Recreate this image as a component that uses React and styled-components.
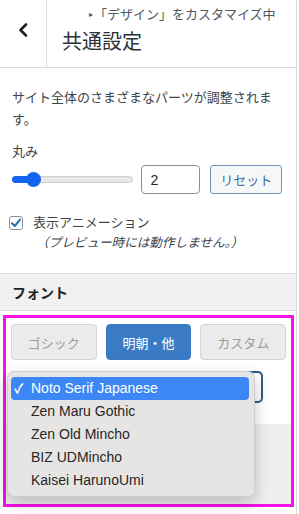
import React from 'react';
import styled, { createGlobalStyle } from 'styled-components';

const Global = createGlobalStyle`
  html, body { margin: 0; padding: 0; background: #fff; }
  body { font-family: "Liberation Sans", "Noto Sans CJK JP", sans-serif; color: #1d2327; }
  * { box-sizing: border-box; }
`;

const Panel = styled.div`
  width: 297px;
  height: 514px;
  border-right: 1px solid #dcdcde;
  background: #fff;
  overflow: hidden;
`;

const Header = styled.header`
  display: flex;
  height: 68px;
  border-bottom: 1px solid #dcdcde;
`;

const BackButton = styled.div`
  width: 47px;
  flex: none;
  border-right: 1px solid #dcdcde;
  display: flex;
  align-items: center;
  justify-content: center;
  padding-bottom: 8px;
`;

const TitleBox = styled.div`
  display: flex;
  flex-direction: column;
  padding: 7px 0 0 15px;
`;

const Action = styled.span`
  font-size: 13px;
  line-height: 16px;
  color: #50575e;
  padding-left: 27px;
  white-space: nowrap;
`;

const Bullet = styled.span`
  font-size: 8px;
  vertical-align: 2px;
  margin-right: 1px;
`;

const Title = styled.h2`
  margin: 6px 0 0;
  font-size: 20px;
  line-height: 26px;
  font-weight: 400;
  color: #2c3338;
`;

const Section = styled.section`
  padding: 19px 14px 20px 12px;
  border-bottom: 1px solid #dcdcde;
  color: #3c434a;
  font-size: 13px;
`;

const Description = styled.p`
  margin: 0;
  line-height: 22px;
`;

const Label = styled.div`
  margin-top: 10px;
  line-height: 22px;
`;

const ControlRow = styled.div`
  margin-top: 2px;
  display: flex;
  align-items: center;
  height: 29px;
`;

const Track = styled.div`
  position: relative;
  width: 124px;
  height: 7px;
  border-radius: 4px;
  background: #e8e8e8;
  border: 1px solid #cfcfcf;
  margin-right: 8px;
`;

const Fill = styled.div`
  position: absolute;
  left: -1px;
  top: -1px;
  height: 7px;
  border-radius: 4px;
  background: #1463f3;
`;

const Thumb = styled.div`
  position: absolute;
  top: 50%;
  width: 15px;
  height: 15px;
  margin: -7.5px 0 0 -7.5px;
  border-radius: 50%;
  background: #1463f3;
`;

const NumberBox = styled.div`
  width: 60px;
  height: 29px;
  border: 1px solid #8c8f94;
  border-radius: 4px;
  padding-left: 8px;
  display: flex;
  align-items: center;
  font-size: 14px;
  color: #1d2327;
  margin-right: 10px;
`;

const ResetButton = styled.div`
  width: 73px;
  height: 29px;
  border: 1px solid #7194bd;
  border-radius: 3px;
  background: #f6f7f7;
  color: #3d6da3;
  font-size: 13px;
  display: flex;
  align-items: center;
  justify-content: center;
`;

const CheckRow = styled.div`
  margin-top: 19px;
  display: flex;
  line-height: 20px;
  margin-left: -3px;
`;

const CheckBox = styled.div`
  width: 14px;
  height: 14px;
  flex: none;
  margin-top: 3px;
  border: 1px solid #8c8f94;
  border-radius: 3px;
  display: flex;
  align-items: center;
  justify-content: center;
  background: #fff;
`;

const CheckText = styled.div`
  margin-left: 10px;
`;

const Note = styled.div`
  font-style: italic;
  font-size: 12.6px;
  margin-left: 3px;
`;

const BandTitle = styled.div`
  height: 37px;
  background: #f0f0f1;
  border-bottom: 1px solid #dcdcde;
  display: flex;
  align-items: center;
  padding-left: 12px;
  font-size: 14px;
  font-weight: 700;
  color: #1d2327;
`;

const FontArea = styled.div`
  padding: 4px 0 0 3px;
`;

const Highlight = styled.div`
  width: 291px;
  border: 3px solid #f511e8;
`;

const ButtonGrid = styled.div`
  display: grid;
  grid-template-columns: repeat(3, 1fr);
  gap: 9px;
  padding: 6px 5px 0;
`;

const TypeButton = styled.div`
  height: 36px;
  border-radius: 4px;
  display: flex;
  align-items: center;
  justify-content: center;
  font-size: 13px;
  border: 1px solid ${p => (p.$active ? '#3978c2' : '#d4d4d4')};
  background: ${p => (p.$active ? '#3b7bc6' : '#ebebeb')};
  color: ${p => (p.$active ? '#fff' : '#9b9b9b')};
`;

const SelectWrap = styled.div`
  position: relative;
  margin: 12px 0 0 5px;
  width: 251px;
  height: 30px;
`;

const SelectBox = styled.div`
  width: 100%;
  height: 100%;
  border: 1px solid #2a5a8e;
  box-shadow: 0 0 0 1px #2a5a8e;
  border-radius: 4px;
  background: #fff;
`;

const Menu = styled.ul`
  position: absolute;
  left: -4px;
  top: -1px;
  width: 248px;
  margin: 0;
  padding: 5px 5px 4px 3px;
  list-style: none;
  background: #e6e5e4;
  border: 1px solid rgba(0, 0, 0, 0.1);
  border-radius: 7px;
  box-shadow: 0 6px 16px rgba(0, 0, 0, 0.22);
  z-index: 2;
`;

const MenuItem = styled.li`
  position: relative;
  height: 23px;
  line-height: 23px;
  padding-left: 20px;
  font-size: 14px;
  border-radius: 4px;
  color: ${p => (p.$selected ? '#fff' : '#262626')};
  background: ${p => (p.$selected ? '#3d86f5' : 'transparent')};
`;

const Tick = styled.span`
  position: absolute;
  left: 3px;
  top: 0;
  font-size: 13px;
  font-weight: 700;
`;

const Spacer = styled.div`
  height: 22px;
`;

const GrayBlock = styled.div`
  height: 80px;
  background: #efefef;
`;

const fonts = ['Noto Serif Japanese', 'Zen Maru Gothic', 'Zen Old Mincho', 'BIZ UDMincho', 'Kaisei HarunoUmi'];

export default function App() {
  const value = 2;
  const pct = 17;
  return (
    <>
      <Global />
      <Panel>
        <Header>
          <BackButton>
            <svg width="12" height="16" viewBox="0 0 12 16">
              <polyline points="9,2.5 3.5,8 9,13.5" fill="none" stroke="#1d2327" strokeWidth="2.6" strokeLinecap="round" strokeLinejoin="round" />
            </svg>
          </BackButton>
          <TitleBox>
            <Action><Bullet>▸</Bullet>「デザイン」をカスタマイズ中</Action>
            <Title>共通設定</Title>
          </TitleBox>
        </Header>

        <Section>
          <Description>サイト全体のさまざまなパーツが調整されます。</Description>
          <Label>丸み</Label>
          <ControlRow>
            <Track>
              <Fill style={{ width: `${pct}%` }} />
              <Thumb style={{ left: `${pct}%` }} />
            </Track>
            <NumberBox>{value}</NumberBox>
            <ResetButton>リセット</ResetButton>
          </ControlRow>
          <CheckRow>
            <CheckBox>
              <svg width="12" height="12" viewBox="0 0 12 12">
                <polyline points="2,6.2 4.8,9 10,2.6" fill="none" stroke="#2271b1" strokeWidth="2" strokeLinecap="round" strokeLinejoin="round" />
              </svg>
            </CheckBox>
            <CheckText>
              <div>表示アニメーション</div>
              <Note>（プレビュー時には動作しません。）</Note>
            </CheckText>
          </CheckRow>
        </Section>

        <BandTitle>フォント</BandTitle>

        <FontArea>
          <Highlight>
            <ButtonGrid>
              <TypeButton>ゴシック</TypeButton>
              <TypeButton $active>明朝・他</TypeButton>
              <TypeButton>カスタム</TypeButton>
            </ButtonGrid>
            <SelectWrap>
              <SelectBox />
              <Menu>
                {fonts.map((f, i) => (
                  <MenuItem key={f} $selected={i === 0}>
                    {i === 0 && <Tick>✓</Tick>}
                    {f}
                  </MenuItem>
                ))}
              </Menu>
            </SelectWrap>
            <Spacer />
            <GrayBlock />
          </Highlight>
        </FontArea>
      </Panel>
    </>
  );
}
